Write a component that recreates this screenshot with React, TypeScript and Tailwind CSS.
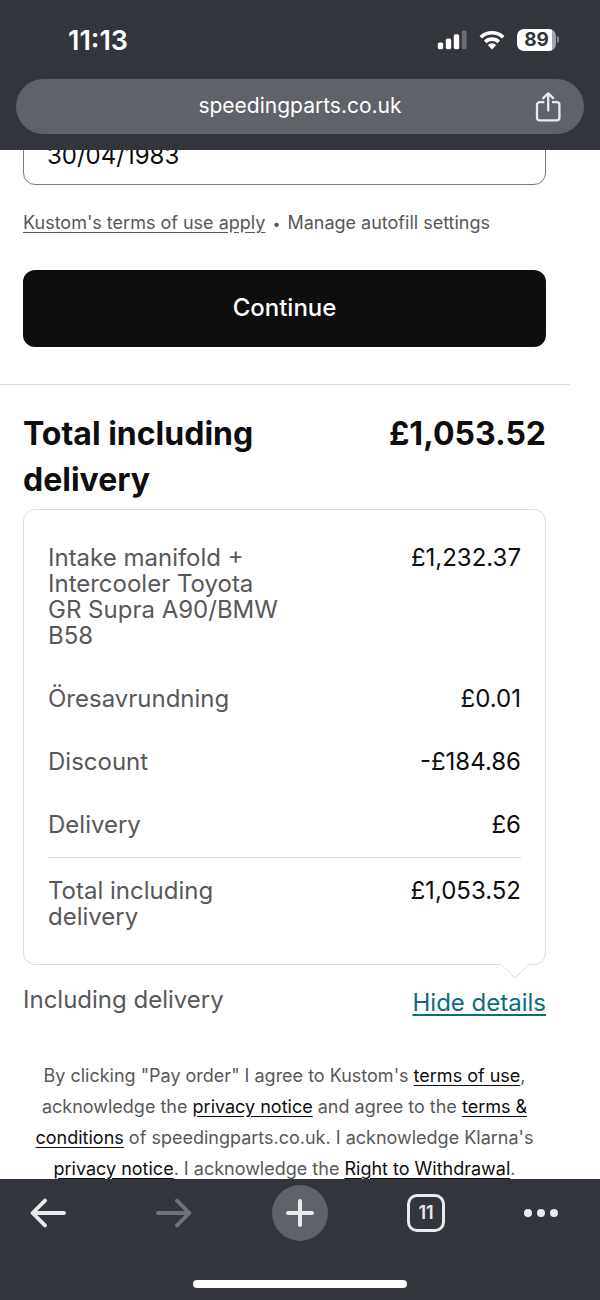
import type { ReactNode } from "react";

const orderLines = [
  {
    label: "Intake manifold + Intercooler Toyota GR Supra A90/BMW B58",
    price: "£1,232.37",
  },
  { label: "Öresavrundning", price: "£0.01" },
  { label: "Discount", price: "-£184.86" },
  { label: "Delivery", price: "£6" },
];

function SignalIcon() {
  return (
    <svg width="30" height="20" viewBox="0 0 30 20" fill="#fff">
      <rect x="0.8" y="12.4" width="5.4" height="6.8" rx="1.6" />
      <rect x="8.8" y="8.6" width="5.4" height="10.6" rx="1.6" />
      <rect x="16.8" y="4.2" width="5.4" height="15" rx="1.6" />
      <rect x="24.8" y="0.6" width="4.8" height="18.6" rx="1.6" opacity="0.28" />
    </svg>
  );
}

function WifiIcon() {
  return (
    <svg width="26" height="20" viewBox="0 0 26 20">
      <path
        d="M1.8 7.2a16.2 16.2 0 0 1 22.4 0M6.2 11.9a9.8 9.8 0 0 1 13.6 0"
        fill="none"
        stroke="#fff"
        strokeWidth="3.6"
      />
      <path d="M8.8 15a6.2 6.2 0 0 1 8.4 0L13 19.4z" fill="#fff" />
    </svg>
  );
}

function Battery() {
  return (
    <div className="flex items-center gap-px">
      <div className="flex h-[22px] w-[39px] items-center justify-center rounded-[7px] bg-linear-to-r from-white from-90% to-[#a3a5a9] to-90% text-[19px] leading-none font-bold text-[#32353c]">
        89
      </div>
      <div className="h-[7px] w-[2px] rounded-r-full bg-[#85878c]" />
    </div>
  );
}

function ShareIcon() {
  return (
    <svg
      width="26"
      height="30"
      viewBox="0 0 26 30"
      fill="none"
      stroke="#e8eaed"
      strokeWidth="2.3"
      strokeLinecap="round"
      strokeLinejoin="round"
    >
      <path d="M9.4 10.2H4.6a2.6 2.6 0 0 0-2.6 2.6v13a2.6 2.6 0 0 0 2.6 2.6h17.2a2.6 2.6 0 0 0 2.6-2.6v-13a2.6 2.6 0 0 0-2.6-2.6H17" strokeLinecap="butt" />
      <path d="M13.2 18.6V1.6M8.2 6.2l5-4.8 5 4.8" />
    </svg>
  );
}

function ArrowIcon({ className }: { className?: string }) {
  return (
    <svg
      width="36"
      height="30"
      viewBox="0 0 36 30"
      fill="none"
      stroke="currentColor"
      strokeWidth="3.8"
      strokeLinecap="round"
      strokeLinejoin="round"
      className={className}
    >
      <path d="M34 15H2.6M15 2.6L2.6 15 15 27.4" />
    </svg>
  );
}

function LegalLink({ children }: { children: ReactNode }) {
  return (
    <a href="#" className="text-[#0e0e0f] underline underline-offset-3">
      {children}
    </a>
  );
}

function BrowserHeader() {
  return (
    <header className="shrink-0 bg-[#32353c] px-4 pb-4 text-white">
      <div className="flex h-[79px] items-center justify-between pr-[25px] pl-[52px]">
        <span className="pt-1 text-[27px] font-semibold">11:13</span>
        <div className="flex items-center gap-3">
          <SignalIcon />
          <WifiIcon />
          <Battery />
        </div>
      </div>
      <div className="grid h-[55px] grid-cols-[48px_1fr_48px] items-center rounded-full bg-[#5f6269] px-3">
        <span className="col-start-2 pb-0.5 text-center text-[21px]">
          speedingparts.co.uk
        </span>
        <button aria-label="Share" className="flex justify-center">
          <ShareIcon />
        </button>
      </div>
    </header>
  );
}

function OrderSummary() {
  return (
    <section className="pt-[26px] pr-6 pl-[23px]">
      <div className="flex justify-between text-[32px] leading-[46px] font-bold text-[#0e0e0f]">
        <h2 className="w-1/2">Total including delivery</h2>
        <span>£1,053.52</span>
      </div>
      <div className="relative mt-1.5 rounded-xl border border-[#dcdcde] px-6 pt-[35px] pb-[34px]">
        <table className="w-full text-2xl leading-[26px]">
          <tbody>
            {orderLines.map((line) => (
              <tr key={line.label} className="group align-top">
                <th className="w-1/2 pb-[37px] text-left font-normal text-[#58585a] group-last:pb-[19px]">
                  {line.label}
                </th>
                <td className="text-right text-[#0e0e0f]">{line.price}</td>
              </tr>
            ))}
          </tbody>
          <tfoot>
            <tr className="border-t border-[#dcdcde] align-top">
              <th className="pt-5 text-left font-normal text-[#58585a]">
                Total including delivery
              </th>
              <td className="pt-5 text-right text-[#0e0e0f]">£1,053.52</td>
            </tr>
          </tfoot>
        </table>
        <svg
          width="30"
          height="16"
          viewBox="0 0 30 16"
          className="absolute right-[15px] -bottom-[15px]"
        >
          <path d="M0 0h30v1L15 15 0 1z" fill="#fff" />
          <path d="M0 0.5L15 15 30 0.5" fill="none" stroke="#dcdcde" />
        </svg>
      </div>
      <div className="mt-[19px] flex justify-between text-2xl leading-8">
        <span className="text-[#58585a]">Including delivery</span>
        <button className="pt-[3px] text-[#116b7f] underline underline-offset-3">
          Hide details
        </button>
      </div>
    </section>
  );
}

function BrowserToolbar() {
  return (
    <footer className="flex shrink-0 flex-col items-center bg-[#32353c] pt-1.5 pb-3 text-[#e8eaed]">
      <nav className="flex h-14 w-full items-center justify-between px-5">
        <button aria-label="Back" className="flex w-14 justify-center">
          <ArrowIcon />
        </button>
        <button aria-label="Forward" className="flex w-14 justify-center text-[#6f7278]">
          <ArrowIcon className="rotate-180" />
        </button>
        <button
          aria-label="New tab"
          className="flex size-14 items-center justify-center rounded-full bg-[#5f6269]"
        >
          <svg width="30" height="30" viewBox="0 0 30 30" stroke="currentColor" strokeWidth="4" strokeLinecap="round">
            <path d="M15 3v24M3 15h24" />
          </svg>
        </button>
        <button aria-label="Tabs" className="flex w-14 justify-center">
          <span className="flex size-[38px] items-center justify-center rounded-[10px] border-3 border-current text-lg leading-none font-semibold">
            11
          </span>
        </button>
        <button aria-label="More" className="flex w-14 justify-start">
          <svg width="36" height="10" viewBox="0 0 36 10" fill="currentColor">
            <circle cx="4" cy="5" r="4" />
            <circle cx="17" cy="5" r="4" />
            <circle cx="30" cy="5" r="4" />
          </svg>
        </button>
      </nav>
      <div className="mt-[39px] h-2 w-[214px] rounded-full bg-white" />
    </footer>
  );
}

export default function App() {
  return (
    <div className="flex h-screen flex-col bg-white font-['Inter',sans-serif]">
      <BrowserHeader />
      <main className="min-h-0 flex-1 overflow-hidden pr-[30px]">
        <div className="-mt-[42px] pr-6 pl-[23px]">
          <input
            aria-label="Date of birth"
            defaultValue="30/04/1983"
            className="block h-[77px] w-full rounded-xl border border-[#7c7c80] px-[23px] pt-[18px] text-2xl text-[#0e0e0f]"
          />
          <p className="mt-[26px] text-lg leading-6 text-[#58585a]">
            <a href="#" className="underline underline-offset-3">
              Kustom's terms of use apply
            </a>{" "}
            <span className="px-0.5 text-sm">•</span>{" "}
            <a href="#">Manage autofill settings</a>
          </p>
          <button className="mt-[35px] h-[77px] w-full rounded-xl bg-[#0e0e0f] pb-0.5 text-2xl font-medium text-white">
            Continue
          </button>
        </div>
        <hr className="mt-[37px] border-[#dcdcde]" />
        <OrderSummary />
        <p className="mt-[41px] pr-6 pl-[23px] text-center text-lg leading-[31px] text-[#58585a]">
          By clicking "Pay order" I agree to Kustom's{" "}
          <LegalLink>terms of use</LegalLink>, acknowledge the{" "}
          <LegalLink>privacy notice</LegalLink> and agree to the{" "}
          <LegalLink>terms & conditions</LegalLink> of speedingparts.co.uk. I
          acknowledge Klarna's <LegalLink>privacy notice</LegalLink>. I
          acknowledge the <LegalLink>Right to Withdrawal</LegalLink>.
        </p>
      </main>
      <BrowserToolbar />
    </div>
  );
}
